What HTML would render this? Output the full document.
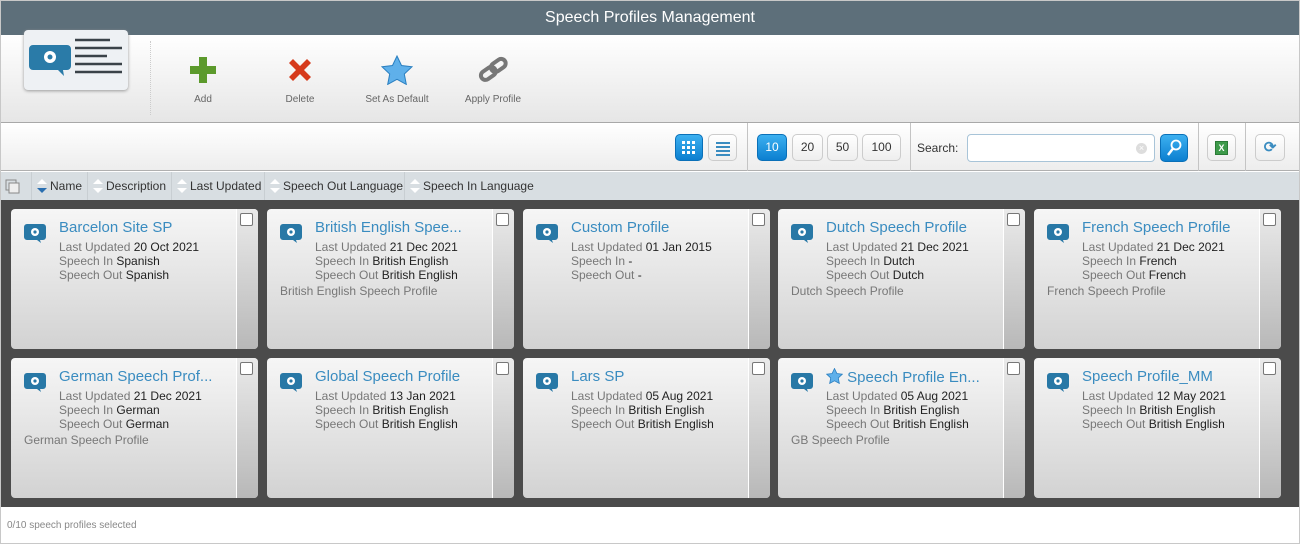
<!DOCTYPE html>
<html><head><style>
*{box-sizing:border-box;margin:0;padding:0}
body{width:1300px;height:544px;font-family:"Liberation Sans",Verdana,sans-serif;background:#fff;position:relative;overflow:hidden}
.frame{position:absolute;left:0;top:0;width:1300px;height:544px;border:1px solid #c8c8c8}
.title{position:absolute;left:1px;top:1px;width:1298px;height:34px;background:#5d6f7a;color:#fff;font-size:16px;text-align:center;line-height:34px}
.tb{position:absolute;left:1px;top:35px;width:1298px;height:88px;background:linear-gradient(#fff,#e6e6e6);border-bottom:1px solid #a8a8a8}
.logo{position:absolute;left:24px;top:30px;width:104px;height:60px;background:#eef1f4;border-radius:4px;box-shadow:0 1px 3px #999;z-index:2}
.tool{position:absolute;text-align:center;font-size:10px;color:#666}
.tool span{position:absolute;top:39px;left:0;width:100%;white-space:nowrap}
.tb2{position:absolute;left:1px;top:123px;width:1298px;height:48px;background:linear-gradient(#fff,#ededed);border-bottom:1px solid #b0b0b0}
.btn{position:absolute;top:134px;height:27px;border:1px solid #ccc;border-radius:5px;background:linear-gradient(#fff,#eee);font-size:12px;color:#333;text-align:center;line-height:25px}
.blue{background:linear-gradient(#3cb0f0,#0c7fd0);border-color:#0a70b8;color:#fff}
.sep{position:absolute;top:123px;width:1px;height:48px;background:#c4c4c4}
.hdr{position:absolute;left:1px;top:172px;width:1298px;height:28px;background:#d8dee2;font-size:12px;color:#333}
.hdr div{position:absolute;top:0;height:28px;line-height:28px;border-left:1px solid #c8ced2;padding-left:18px}
.arr{position:absolute;left:5px;top:7px;width:0;height:0;border:5px solid transparent;border-bottom-color:#fff;border-top:0}
.arr2{position:absolute;left:5px;top:16px;width:0;height:0;border:5px solid transparent;border-top-color:#fff;border-bottom:0}
.grid{position:absolute;left:1px;top:200px;width:1298px;height:307px;background:#4b4b4b}
.card{position:absolute;width:247px;height:140px;border-radius:4px;background:linear-gradient(#f6f6f6,#d2d2d2);overflow:hidden}
.strip{position:absolute;right:0;top:0;width:22px;height:100%;background:linear-gradient(#eaeaea,#b8b8b8);border-left:1px solid #fff}
.cb{position:absolute;right:5px;top:4px;width:13px;height:13px;border:1px solid #777;border-radius:2px;background:#fff}
.ic{position:absolute;left:13px;top:15px}
.ct{position:absolute;left:48px;top:10px;font-size:15px;color:#3a8cc0;white-space:nowrap}
.cl{position:absolute;left:48px;top:31px;font-size:12px;line-height:14px;color:#777}
.cl b{font-weight:normal;color:#222}
.cd{position:absolute;left:13px;top:75px;font-size:12px;color:#777}
.foot{position:absolute;left:7px;top:520px;font-size:10px;color:#888}
</style></head><body>
<div class="frame"></div>
<div class="title">Speech Profiles Management</div>
<div class="tb">
 <div style="position:absolute;left:149px;top:6px;width:1px;height:74px;border-left:1px dotted #ccc"></div>
 <div class="tool" style="left:172px;width:60px;top:20px"><svg width="30" height="30"><path d="M11 2h8v9h9v8h-9v9h-8v-9H2v-8h9z" fill="#5c9a2c"/></svg><span>Add</span></div>
 <div class="tool" style="left:269px;width:60px;top:20px"><svg width="30" height="30"><path d="M4 8l4-4 7 7 7-7 4 4-7 7 7 7-4 4-7-7-7 7-4-4 7-7z" fill="#d63a1c"/></svg><span>Delete</span></div>
 <div class="tool" style="left:356px;width:80px;top:20px"><svg width="32" height="30"><path d="M16 1l4.5 9.5 10.5 1.3-7.7 7.2 2 10.4L16 24.3 6.7 29.4l2-10.4L1 11.8l10.5-1.3z" fill="#5fb0ea" stroke="#2a7fc0"/></svg><span>Set As Default</span></div>
 <div class="tool" style="left:456px;width:72px;top:20px"><svg width="32" height="30"><g fill="none" stroke="#777" stroke-width="4"><rect x="3" y="14" width="16" height="9" rx="4.5" transform="rotate(-35 11 18)"/><rect x="13" y="6" width="16" height="9" rx="4.5" transform="rotate(-35 21 10)"/></g></svg><span>Apply Profile</span></div>
</div>
<div class="logo">
  <svg width="104" height="60"><path d="M9 15h34a4 4 0 0 1 4 4v17a4 4 0 0 1-4 4h-4l1 6-6-6H9a4 4 0 0 1-4-4V19a4 4 0 0 1 4-4z" fill="#2a7ba8"/><circle cx="26" cy="27" r="6" fill="#fff"/><circle cx="26" cy="27" r="2.5" fill="#2a7ba8"/><g stroke="#3a4248" stroke-width="2.5"><line x1="51" y1="10" x2="86" y2="10"/><line x1="51" y1="18" x2="98" y2="18"/><line x1="51" y1="26" x2="83" y2="26"/><line x1="51" y1="34" x2="98" y2="34"/><line x1="51" y1="42" x2="98" y2="42"/></g></svg>
</div>
<div class="tb2"></div>
<div class="btn blue" style="left:675px;width:28px"><svg width="16" height="16" style="margin-top:5px"><g fill="#fff"><rect x="1" y="1" width="3" height="3"/><rect x="6" y="1" width="3" height="3"/><rect x="11" y="1" width="3" height="3"/><rect x="1" y="6" width="3" height="3"/><rect x="6" y="6" width="3" height="3"/><rect x="11" y="6" width="3" height="3"/><rect x="1" y="11" width="3" height="3"/><rect x="6" y="11" width="3" height="3"/><rect x="11" y="11" width="3" height="3"/></g></svg></div>
<div class="btn" style="left:708px;width:29px"><svg width="16" height="16" style="margin-top:5px"><g fill="#3a8cc0"><rect x="1" y="2" width="14" height="2"/><rect x="1" y="6" width="14" height="2"/><rect x="1" y="10" width="14" height="2"/><rect x="1" y="14" width="14" height="2"/></g></svg></div>
<div class="sep" style="left:747px"></div>
<div class="btn blue" style="left:757px;width:30px">10</div>
<div class="btn" style="left:792px;width:31px">20</div>
<div class="btn" style="left:827px;width:31px">50</div>
<div class="btn" style="left:862px;width:39px">100</div>
<div class="sep" style="left:910px"></div>
<div style="position:absolute;left:917px;top:141px;font-size:12px;color:#333">Search:</div>
<div style="position:absolute;left:967px;top:134px;width:188px;height:28px;border:1px solid #a8c4d8;border-radius:4px;background:#fff"><div style="position:absolute;right:7px;top:8px;width:11px;height:11px;border-radius:50%;background:#ddd;color:#fff;font-size:9px;line-height:11px;text-align:center">×</div></div>
<div class="btn blue" style="left:1160px;width:28px;height:28px"><svg width="16" height="18" style="margin-top:4px"><circle cx="10" cy="6" r="4.5" fill="none" stroke="#fff" stroke-width="1.8"/><line x1="7" y1="9.5" x2="2" y2="16" stroke="#fff" stroke-width="2.5"/></svg></div>
<div class="sep" style="left:1198px"></div>
<div class="btn" style="left:1207px;width:29px"><div style="margin:6px auto 0;width:13px;height:14px;background:#3d9a4a;border:1px solid #2a7a36;color:#fff;font-size:9px;line-height:12px;font-weight:bold">X</div></div>
<div class="sep" style="left:1245px"></div>
<div class="btn" style="left:1255px;width:30px;color:#3a8cc0;font-size:15px;font-weight:bold">⟳</div>
<div class="hdr">
 <div style="left:0;border:0;padding-left:0"><svg width="20" height="28"><rect x="5" y="8" width="10" height="10" fill="none" stroke="#888"/><rect x="8" y="11" width="10" height="10" fill="#eee" stroke="#888"/></svg></div>
 <div style="left:30px"><span class="arr"></span><span class="arr2" style="border-top-color:#2a6fb0"></span>Name</div>
 <div style="left:86px"><span class="arr"></span><span class="arr2"></span>Description</div>
 <div style="left:170px"><span class="arr"></span><span class="arr2"></span>Last Updated</div>
 <div style="left:263px"><span class="arr"></span><span class="arr2"></span>Speech Out Language</div>
 <div style="left:403px"><span class="arr"></span><span class="arr2"></span>Speech In Language</div>
</div>
<div class="grid"></div>
<svg width="0" height="0" style="position:absolute"><defs><g id="gi"><path d="M3 0h16a3 3 0 0 1 3 3v10a3 3 0 0 1-3 3h-3l1 3-4-3H3a3 3 0 0 1-3-3V3a3 3 0 0 1 3-3z" fill="#2878a6"/><circle cx="11" cy="8" r="4" fill="#fff"/><circle cx="11" cy="8" r="1.6" fill="#2878a6"/></g></defs></svg>

<div class="card" style="left:11px;top:209px"><div class="strip"><div class="cb"></div></div><svg class="ic" width="22" height="20"><use href="#gi"/></svg><div class="ct">Barcelon Site SP</div><div class="cl">Last Updated <b>20 Oct 2021</b><br>Speech In <b>Spanish</b><br>Speech Out <b>Spanish</b></div></div>
<div class="card" style="left:267px;top:209px"><div class="strip"><div class="cb"></div></div><svg class="ic" width="22" height="20"><use href="#gi"/></svg><div class="ct">British English Spee...</div><div class="cl">Last Updated <b>21 Dec 2021</b><br>Speech In <b>British English</b><br>Speech Out <b>British English</b></div><div class="cd">British English Speech Profile</div></div>
<div class="card" style="left:523px;top:209px"><div class="strip"><div class="cb"></div></div><svg class="ic" width="22" height="20"><use href="#gi"/></svg><div class="ct">Custom Profile</div><div class="cl">Last Updated <b>01 Jan 2015</b><br>Speech In <b>-</b><br>Speech Out <b>-</b></div></div>
<div class="card" style="left:778px;top:209px"><div class="strip"><div class="cb"></div></div><svg class="ic" width="22" height="20"><use href="#gi"/></svg><div class="ct">Dutch Speech Profile</div><div class="cl">Last Updated <b>21 Dec 2021</b><br>Speech In <b>Dutch</b><br>Speech Out <b>Dutch</b></div><div class="cd">Dutch Speech Profile</div></div>
<div class="card" style="left:1034px;top:209px"><div class="strip"><div class="cb"></div></div><svg class="ic" width="22" height="20"><use href="#gi"/></svg><div class="ct">French Speech Profile</div><div class="cl">Last Updated <b>21 Dec 2021</b><br>Speech In <b>French</b><br>Speech Out <b>French</b></div><div class="cd">French Speech Profile</div></div>

<div class="card" style="left:11px;top:358px"><div class="strip"><div class="cb"></div></div><svg class="ic" width="22" height="20"><use href="#gi"/></svg><div class="ct">German Speech Prof...</div><div class="cl">Last Updated <b>21 Dec 2021</b><br>Speech In <b>German</b><br>Speech Out <b>German</b></div><div class="cd">German Speech Profile</div></div>
<div class="card" style="left:267px;top:358px"><div class="strip"><div class="cb"></div></div><svg class="ic" width="22" height="20"><use href="#gi"/></svg><div class="ct">Global Speech Profile</div><div class="cl">Last Updated <b>13 Jan 2021</b><br>Speech In <b>British English</b><br>Speech Out <b>British English</b></div></div>
<div class="card" style="left:523px;top:358px"><div class="strip"><div class="cb"></div></div><svg class="ic" width="22" height="20"><use href="#gi"/></svg><div class="ct">Lars SP</div><div class="cl">Last Updated <b>05 Aug 2021</b><br>Speech In <b>British English</b><br>Speech Out <b>British English</b></div></div>
<div class="card" style="left:778px;top:358px"><div class="strip"><div class="cb"></div></div><svg class="ic" width="22" height="20"><use href="#gi"/></svg><div class="ct"><svg width="17" height="16" style="vertical-align:-2px"><path d="M8.5 0.5l2.4 5 5.4.7-4 3.8 1 5.4-4.8-2.6-4.8 2.6 1-5.4-4-3.8 5.4-.7z" fill="#5fb0ea" stroke="#2a7fc0" stroke-width=".8"/></svg> Speech Profile En...</div><div class="cl">Last Updated <b>05 Aug 2021</b><br>Speech In <b>British English</b><br>Speech Out <b>British English</b></div><div class="cd">GB Speech Profile</div></div>
<div class="card" style="left:1034px;top:358px"><div class="strip"><div class="cb"></div></div><svg class="ic" width="22" height="20"><use href="#gi"/></svg><div class="ct">Speech Profile_MM</div><div class="cl">Last Updated <b>12 May 2021</b><br>Speech In <b>British English</b><br>Speech Out <b>British English</b></div></div>

<div class="foot">0/10 speech profiles selected</div>
</body></html>
